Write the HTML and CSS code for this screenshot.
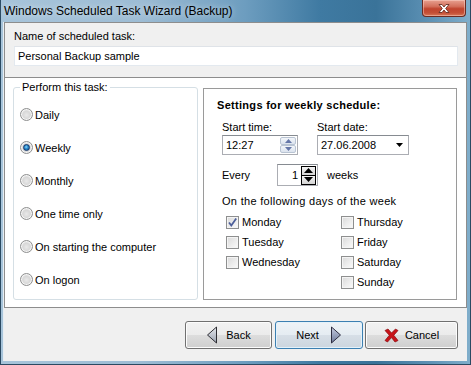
FILE: index.html
```html
<!DOCTYPE html>
<html>
<head>
<meta charset="utf-8">
<link rel="stylesheet" href="styles.css">
</head>
<body>
<div class="window">
  <div class="titlebar">
    <span class="title">Windows Scheduled Task Wizard (Backup)</span>
    <div class="close">
      <svg width="16" height="11" viewBox="0 0 16 11"><path d="M3 1.5 L6 1.5 L8 4 L10 1.5 L13 1.5 L9.7 5.5 L13 9.5 L10 9.5 L8 7 L6 9.5 L3 9.5 L6.3 5.5 Z" fill="#fff" stroke="#5a2218" stroke-width="0.8" stroke-linejoin="round"/></svg>
    </div>
  </div>
  <div class="client">
    <section class="name-panel">
      <label class="name-label">Name of scheduled task:</label>
      <div class="textbox name-input">Personal Backup sample</div>
    </section>
    <section class="main-panel">
      <div class="group">
        <span class="legend">Perform this task:</span>
        <div class="radio-row"><span class="radio"></span><span>Daily</span></div>
        <div class="radio-row"><span class="radio checked"></span><span>Weekly</span></div>
        <div class="radio-row"><span class="radio"></span><span>Monthly</span></div>
        <div class="radio-row"><span class="radio"></span><span>One time only</span></div>
        <div class="radio-row"><span class="radio"></span><span>On starting the computer</span></div>
        <div class="radio-row"><span class="radio"></span><span>On logon</span></div>
      </div>
      <div class="settings">
        <div class="settings-title">Settings for weekly schedule:</div>
        <div class="start-row">
          <div class="field">
            <span class="field-label">Start time:</span>
            <div class="textbox time-box">
              <span>12:27</span>
              <div class="spin-light">
                <span class="spin-btn-l"><svg width="7" height="4" viewBox="0 0 7 4"><path d="M0 4 L3.5 0 L7 4 Z" fill="#6577a8"/></svg></span>
                <span class="spin-btn-l"><svg width="7" height="4" viewBox="0 0 7 4"><path d="M0 0 L3.5 4 L7 0 Z" fill="#6577a8"/></svg></span>
              </div>
            </div>
          </div>
          <div class="field">
            <span class="field-label">Start date:</span>
            <div class="textbox date-box">
              <span>27.06.2008</span>
              <svg width="7" height="4" viewBox="0 0 7 4"><path d="M0 0 L7 0 L3.5 4 Z" fill="#000"/></svg>
            </div>
          </div>
        </div>
        <div class="every-row">
          <span class="every-label">Every</span>
          <div class="textbox num-box">
            <span class="num">1</span>
            <div class="spin-dark">
              <span class="spin-btn-d"><svg width="9" height="5" viewBox="0 0 9 5"><path d="M0 5 L4.5 0 L9 5 Z" fill="#000"/></svg></span>
              <span class="spin-btn-d"><svg width="9" height="5" viewBox="0 0 9 5"><path d="M0 0 L4.5 5 L9 0 Z" fill="#000"/></svg></span>
            </div>
          </div>
          <span class="weeks">weeks</span>
        </div>
        <div class="days-label">On the following days of the week</div>
        <div class="days">
          <div class="day-col">
            <div class="check-row"><span class="check checked"><svg width="11" height="11" viewBox="0 0 11 11"><path d="M2 5.5 L4.3 8.5 L9.2 1.5" fill="none" stroke="#4d5f9a" stroke-width="1.8"/></svg></span><span>Monday</span></div>
            <div class="check-row"><span class="check"></span><span>Tuesday</span></div>
            <div class="check-row"><span class="check"></span><span>Wednesday</span></div>
          </div>
          <div class="day-col">
            <div class="check-row"><span class="check"></span><span>Thursday</span></div>
            <div class="check-row"><span class="check"></span><span>Friday</span></div>
            <div class="check-row"><span class="check"></span><span>Saturday</span></div>
            <div class="check-row"><span class="check"></span><span>Sunday</span></div>
          </div>
        </div>
      </div>
    </section>
    <div class="footer">
      <button class="btn btn-back">
        <svg width="12" height="18" viewBox="0 0 12 18"><defs><linearGradient id="gb" x1="0" y1="0" x2="0" y2="1"><stop offset="0" stop-color="#e6e9ee"/><stop offset="1" stop-color="#9aa2b0"/></linearGradient></defs><path d="M10.5 1 L10.5 17 L1.5 9 Z" fill="url(#gb)" stroke="#2d2d33" stroke-width="1" stroke-linejoin="round"/></svg>
        <span>Back</span>
      </button>
      <button class="btn btn-next">
        <span>Next</span>
        <svg width="12" height="18" viewBox="0 0 12 18"><defs><linearGradient id="gn" x1="0" y1="0" x2="0" y2="1"><stop offset="0" stop-color="#c6cde0"/><stop offset="1" stop-color="#6c7898"/></linearGradient></defs><path d="M1.5 1 L1.5 17 L10.5 9 Z" fill="url(#gn)" stroke="#2d2d40" stroke-width="1" stroke-linejoin="round"/></svg>
      </button>
      <button class="btn btn-cancel">
        <svg width="15" height="15" viewBox="0 0 15 15"><path d="M1 2.5 L4 1 L7.5 5 L11.5 1 L14 2.5 L9.8 7.3 L14 12.5 L11 14 L7.5 9.6 L3.5 14 L1 12.5 L5.3 7.3 Z" fill="#c8141a" stroke="#8a0a0d" stroke-width="0.7" stroke-linejoin="round"/></svg>
        <span>Cancel</span>
      </button>
    </div>
  </div>
</div>
</body>
</html>
```

FILE: styles.css
```css
* { box-sizing: border-box; }
html, body { margin: 0; padding: 0; }
body {
  width: 471px;
  height: 365px;
  overflow: hidden;
  font-family: "Liberation Sans", Arial, sans-serif;
  font-size: 11px;
  color: #000;
}
.window {
  width: 471px;
  height: 365px;
  display: flex;
  flex-direction: column;
  background: linear-gradient(to right, #a7c4da 0%, #9dbcd4 30%, #6d9dbf 52%, #3f7aa2 68%, #3a7399 80%, #5f93b6 92%, #80aecb 100%);
  border: 1px solid #2b4a62;
  border-top: none;
}
.titlebar {
  height: 22px;
  flex: none;
  display: flex;
  align-items: flex-start;
  justify-content: space-between;
}
.title {
  font-family: "Liberation Sans", Arial, sans-serif;
  font-size: 12px;
  color: #000;
  margin: 4px 0 0 3px;
  text-shadow: 0 0 6px rgba(255,255,255,0.7);
}
.close {
  width: 44px;
  height: 17px;
  margin-right: 4px;
  border: 1px solid #6b2b22;
  border-top: none;
  border-radius: 0 0 4px 4px;
  background: linear-gradient(#e8a190 0%, #d3705c 40%, #c0442e 55%, #c44f36 80%, #d77556 100%);
  box-shadow: inset 0 0 0 1px rgba(255,220,210,0.45);
  display: flex;
  align-items: center;
  justify-content: center;
}
.client {
  flex: 1;
  display: flex;
  flex-direction: column;
  margin: 0 3px 3px 2px;
  border-left: 1px solid #e8eef3;
  background: #f0f0f0;
}
.name-panel {
  height: 56px;
  flex: none;
  border: 1px solid #8d8d8d;
  background: #f0f0f0;
  padding: 6px 8px 0 9px;
  display: flex;
  flex-direction: column;
}
.name-label { height: 14px; line-height: 14px; margin-bottom: 3px; }
.textbox {
  background: #fff;
  border: 1px solid #abadb3;
  border-top-color: #868b91;
  display: flex;
  align-items: center;
}
.name-input {
  height: 20px;
  padding-left: 3px;
  border-color: #e3e9ef;
  border-top-color: #dfe3e8;
}
.main-panel {
  height: 231px;
  flex: none;
  margin-top: -1px;
  border: 1px solid #8d8d8d;
  background: #fff;
  display: flex;
  align-items: flex-start;
  padding: 9px 9px 0 8px;
  gap: 5px;
}
.group {
  width: 185px;
  height: 213px;
  border: 1px solid #d5dfe5;
  border-radius: 3px;
  position: relative;
  padding: 10px 0 0 6px;
  display: flex;
  flex-direction: column;
}
.legend {
  position: absolute;
  top: -8px;
  left: 6px;
  background: #fff;
  padding: 0 2px;
  line-height: 14px;
}
.radio-row {
  height: 33px;
  display: flex;
  align-items: center;
  gap: 2px;
}
.radio {
  width: 13px;
  height: 13px;
  border-radius: 50%;
  border: 1px solid #8e8f8f;
  background: radial-gradient(circle at 50% 55%, #e9e9e9 0%, #d8d8d8 45%, #f4f4f4 100%);
  box-shadow: inset 0 0 0 1px #f5f5f5;
  position: relative;
  flex: none;
}
.radio.checked::after {
  content: "";
  position: absolute;
  left: 2px; top: 2px;
  width: 7px; height: 7px;
  border-radius: 50%;
  background: radial-gradient(circle at 45% 40%, #8fd7f8 0%, #2c8ed0 40%, #0f4d86 100%);
  border: 1px solid #14366a;
  box-sizing: border-box;
}
.settings {
  width: 254px;
  height: 212px;
  margin-top: 1px;
  border: 1px solid #9a9a9a;
  padding: 9px 0 0 13px;
  display: flex;
  flex-direction: column;
}
.settings-title {
  font-weight: bold;
  height: 14px;
  line-height: 14px;
  letter-spacing: 0.3px;
}
.start-row {
  display: flex;
  gap: 19px;
  margin-top: 8px;
  padding-left: 5px;
}
.field { display: flex; flex-direction: column; }
.field-label { height: 14px; line-height: 14px; margin-bottom: 1px; }
.time-box {
  width: 76px;
  height: 20px;
  padding-left: 3px;
  justify-content: space-between;
  padding-right: 1px;
}
.spin-light {
  display: flex;
  flex-direction: column;
  width: 16px;
}
.spin-btn-l {
  height: 8px;
  border: 1px solid #b9c4d3;
  border-radius: 2px;
  background: linear-gradient(#f3f6fa, #dbe3ee);
  display: flex;
  align-items: center;
  justify-content: center;
}
.date-box {
  width: 92px;
  height: 20px;
  padding: 0 5px 0 3px;
  justify-content: space-between;
}
.every-row {
  display: flex;
  align-items: center;
  margin-top: 9px;
  padding-left: 5px;
  height: 22px;
}
.every-label { width: 55px; }
.num-box {
  width: 41px;
  height: 22px;
  justify-content: flex-end;
  padding-right: 1px;
}
.num { margin-right: 3px; }
.spin-dark {
  display: flex;
  flex-direction: column;
  width: 15px;
  height: 19px;
  border-left: 1px solid #000;
}
.spin-btn-d {
  flex: 1;
  border: 1px solid #000;
  border-left: none;
  background: linear-gradient(#f4f4f4, #d4d4d4);
  display: flex;
  align-items: center;
  justify-content: center;
}
.spin-btn-d + .spin-btn-d { border-top: none; }
.weeks { margin-left: 9px; }
.days-label {
  margin-top: 8px;
  padding-left: 5px;
  height: 14px;
  line-height: 14px;
  letter-spacing: 0.3px;
}
.days {
  display: flex;
  margin-top: 4px;
  padding-left: 9px;
}
.day-col { width: 120px; display: flex; flex-direction: column; }
.check-row {
  height: 20px;
  display: flex;
  align-items: center;
  gap: 3px;
}
.check {
  width: 13px;
  height: 13px;
  border: 1px solid #8e8f8f;
  background: linear-gradient(135deg, #d9d9d9 0%, #eeeeee 60%, #fafafa 100%);
  box-shadow: inset 0 0 0 1px #f4f4f4;
  flex: none;
  display: flex;
  align-items: center;
  justify-content: center;
}
.check.checked svg { display: block; }
.footer {
  flex: 1;
  display: flex;
  justify-content: flex-end;
  align-items: flex-start;
  padding: 13px 9px 0 0;
  gap: 3px;
}
.btn {
  height: 28px;
  font-family: "Liberation Sans", Arial, sans-serif;
  font-size: 11px;
  color: #000;
  border: 1px solid #707070;
  border-radius: 3px;
  background: linear-gradient(#f2f2f2 0%, #ebebeb 50%, #dddddd 50%, #cfcfcf 100%);
  box-shadow: inset 0 0 0 1px #fcfcfc;
  display: flex;
  align-items: center;
  justify-content: center;
  gap: 8px;
  padding: 0;
}
.btn-back { width: 87px; }
.btn-next {
  width: 88px;
  border-color: #3c7fb1;
  background: linear-gradient(#eef3f7 0%, #e5ecf2 50%, #d7dfe7 50%, #ccd5de 100%);
  box-shadow: inset 0 0 0 1px #e3f2fb;
  gap: 11px;
}
.btn-cancel { width: 93px; margin-left: -1px; gap: 6px; }
```
